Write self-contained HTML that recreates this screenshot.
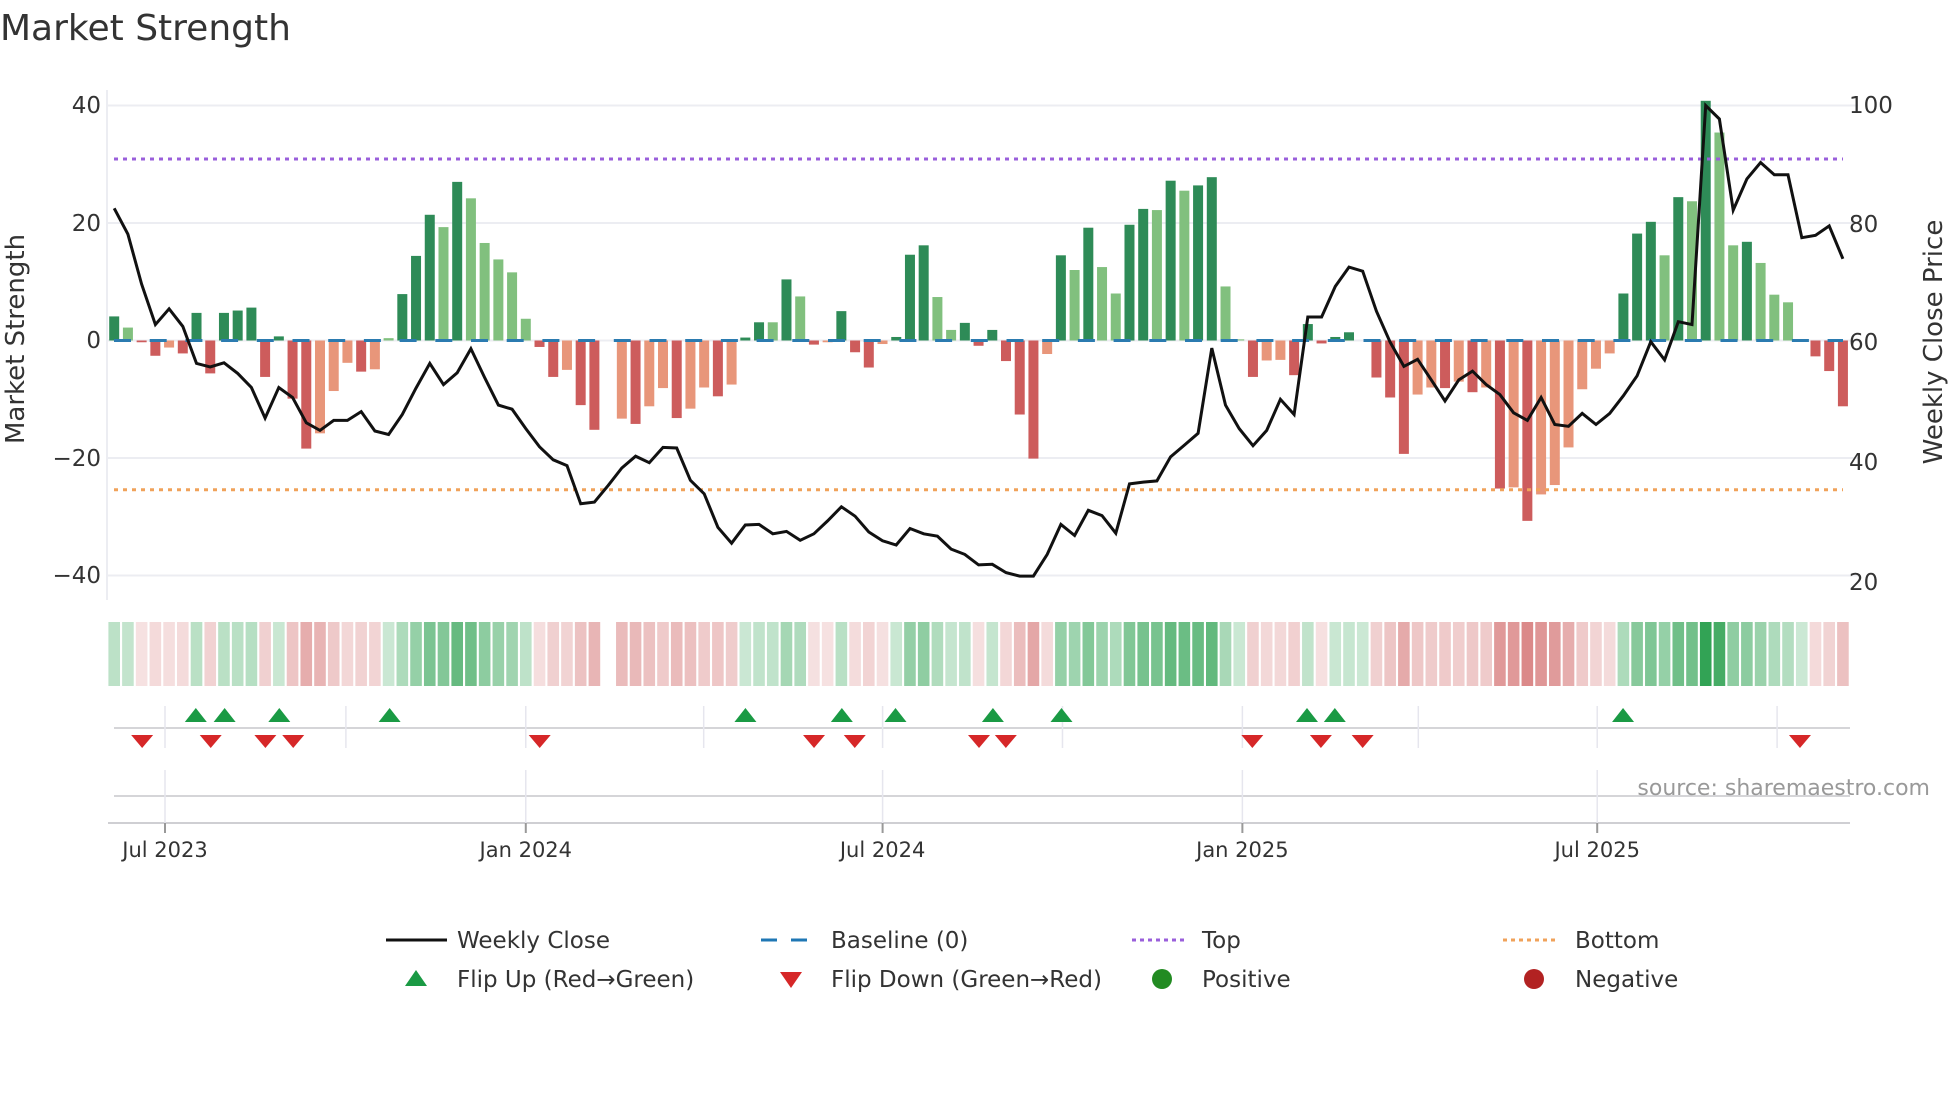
<!DOCTYPE html>
<html><head><meta charset="utf-8">
<style>
html,body{margin:0;padding:0;background:#fff;}
svg{display:block;font-family:"DejaVu Sans","Liberation Sans",sans-serif;}
</style></head>
<body>
<svg id="c" width="1960" height="1102" viewBox="0 0 1960 1102" xmlns="http://www.w3.org/2000/svg">
<rect width="1960" height="1102" fill="#fff"/>
<text x="0" y="40" font-size="36" fill="#333">Market Strength</text>
<g id="grid"></g>
<g id="heat"></g>
<g id="bars"></g>
<g id="lines"></g>
<g font-size="23" fill="#333" text-anchor="end">
<text x="101" y="113">40</text><text x="101" y="231">20</text><text x="101" y="348">0</text><text x="101" y="466">−20</text><text x="101" y="583">−40</text>
</g>
<g font-size="23" fill="#333">
<text x="1849" y="113">100</text><text x="1849" y="232">80</text><text x="1849" y="350">60</text><text x="1849" y="470">40</text><text x="1849" y="590">20</text>
</g>
<text transform="translate(24,339) rotate(-90)" font-size="26" fill="#333" text-anchor="middle">Market Strength</text>
<text transform="translate(1942,342) rotate(-90)" font-size="26" fill="#333" text-anchor="middle">Weekly Close Price</text>
<g font-size="21" fill="#333" text-anchor="middle" id="ticks"></g>
<text x="1930" y="795" font-size="22" fill="#999" text-anchor="end">source: sharemaestro.com</text>
<g font-size="23" fill="#333" transform="translate(-2,-5)">
<line x1="388" y1="945" x2="449" y2="945" stroke="#111" stroke-width="3"/>
<text x="459" y="953">Weekly Close</text>
<line x1="763" y1="945" x2="818" y2="945" stroke="#1f77b4" stroke-width="3" stroke-dasharray="16,14"/>
<text x="833" y="953">Baseline (0)</text>
<line x1="1134" y1="945" x2="1189" y2="945" stroke="#9a5fdb" stroke-width="3" stroke-dasharray="4,4"/>
<text x="1204" y="953">Top</text>
<line x1="1505" y1="945" x2="1561" y2="945" stroke="#f0a25a" stroke-width="3" stroke-dasharray="4,4"/>
<text x="1577" y="953">Bottom</text>
<polygon points="407,991 429,991 418,975" fill="#1a9a44"/>
<text x="459" y="992">Flip Up (Red→Green)</text>
<polygon points="782,977 804,977 793,993" fill="#d62728"/>
<text x="833" y="992">Flip Down (Green→Red)</text>
<circle cx="1164" cy="984" r="10" fill="#228b22"/>
<text x="1204" y="992">Positive</text>
<circle cx="1536" cy="984" r="10" fill="#b22222"/>
<text x="1577" y="992">Negative</text>
</g>
</svg>
<script>
(function(){
var NS="http://www.w3.org/2000/svg";
function el(p,t,a){var e=document.createElementNS(NS,t);for(var k in a)e.setAttribute(k,a[k]);p.appendChild(e);return e;}
function F(x){return x-(x-165)*0.0061;}
var V=[[4.1,'D'],[2.2,'L'],[-0.3,'R'],[-2.6,'R'],[-1.2,'S'],[-2.2,'R'],[4.7,'D'],[-5.6,'R'],[4.7,'D'],[5.1,'D'],[5.6,'D'],[-6.2,'R'],[0.7,'D'],[-9.9,'R'],[-18.4,'R'],[-15.8,'S'],[-8.6,'S'],[-3.8,'S'],[-5.3,'R'],[-4.9,'S'],[0.4,'L'],[7.9,'D'],[14.4,'D'],[21.4,'D'],[19.3,'L'],[27,'D'],[24.2,'L'],[16.6,'L'],[13.8,'L'],[11.6,'L'],[3.7,'L'],[-1.1,'R'],[-6.2,'R'],[-5,'S'],[-11,'R'],[-15.2,'R'],null,[-13.3,'S'],[-14.2,'R'],[-11.2,'S'],[-8.1,'S'],[-13.2,'R'],[-11.6,'S'],[-8,'S'],[-9.5,'R'],[-7.5,'S'],[0.5,'D'],[3.1,'D'],[3.1,'L'],[10.4,'D'],[7.5,'L'],[-0.7,'R'],[-0.3,'S'],[5,'D'],[-2,'R'],[-4.6,'R'],[-0.6,'S'],[0.6,'D'],[14.6,'D'],[16.2,'D'],[7.4,'L'],[1.8,'L'],[3,'D'],[-0.9,'R'],[1.8,'D'],[-3.5,'R'],[-12.6,'R'],[-20.1,'R'],[-2.3,'S'],[14.5,'D'],[12,'L'],[19.2,'D'],[12.5,'L'],[8,'L'],[19.7,'D'],[22.4,'D'],[22.2,'L'],[27.2,'D'],[25.5,'L'],[26.4,'D'],[27.8,'D'],[9.2,'L'],[0.2,'L'],[-6.2,'R'],[-3.4,'S'],[-3.3,'S'],[-5.9,'R'],[2.8,'D'],[-0.5,'R'],[0.6,'D'],[1.4,'D'],[0,'L'],[-6.3,'R'],[-9.7,'R'],[-19.3,'R'],[-9.2,'S'],[-8,'S'],[-8.1,'R'],[-7,'S'],[-8.8,'R'],[-8,'S'],[-25.2,'R'],[-25,'S'],[-30.7,'R'],[-26.2,'S'],[-24.6,'S'],[-18.2,'S'],[-8.3,'S'],[-4.8,'S'],[-2.2,'S'],[8,'D'],[18.2,'D'],[20.2,'D'],[14.5,'L'],[24.4,'D'],[23.7,'L'],[40.8,'D'],[35.4,'L'],[16.2,'L'],[16.8,'D'],[13.2,'L'],[7.8,'L'],[6.5,'L'],[0,'L'],[-2.7,'R'],[-5.2,'R'],[-11.2,'R']];
var P=[22.5,18.1,9.6,2.7,5.4,2.4,-3.9,-4.5,-3.8,-5.6,-8,-13.2,-8,-9.7,-14,-15.3,-13.6,-13.6,-12.1,-15.4,-16,-12.6,-8.1,-3.9,-7.5,-5.5,-1.4,-6.3,-11,-11.7,-15,-18.1,-20.3,-21.3,-27.8,-27.5,-24.7,-21.7,-19.7,-20.8,-18.2,-18.3,-23.8,-26.1,-31.8,-34.5,-31.4,-31.3,-32.9,-32.5,-34,-32.9,-30.7,-28.3,-29.9,-32.6,-34.1,-34.8,-32,-32.9,-33.3,-35.5,-36.4,-38.2,-38.1,-39.5,-40.1,-40.1,-36.4,-31.3,-33.2,-28.9,-29.8,-32.8,-24.4,-24.1,-23.9,-19.8,-17.8,-15.8,-1.3,-11,-15,-17.9,-15.3,-10,-12.6,4,4,9.2,12.5,11.8,5,-0.3,-4.4,-3.2,-6.7,-10.3,-6.7,-5.2,-7.5,-9.2,-12.3,-13.6,-9.7,-14.3,-14.6,-12.4,-14.3,-12.4,-9.4,-6,-0.2,-3.3,3.2,2.7,40,37.7,22.2,27.5,30.3,28.2,28.2,17.5,17.9,19.5,13.9];
function X(i){return 114.2+i*13.72;}
function Y(v){return 340.5-v*5.875;}
var col={D:'#2e8b57',L:'#81c07e',R:'#cd5c5c',S:'#e8967a'};
var g=document.getElementById('grid');
[40,20,0,-20,-40].forEach(function(v){el(g,'line',{x1:108,x2:1858,y1:Y(v),y2:Y(v),stroke:'#ecedf2','stroke-width':2});});
el(g,'line',{x1:107,x2:107,y1:90,y2:600,stroke:'#ecedf2','stroke-width':2});
el(g,'line',{x1:114,x2:1850,y1:728,y2:728,stroke:'#d5d5d8','stroke-width':2});
el(g,'line',{x1:114,x2:1850,y1:796,y2:796,stroke:'#d5d5d8','stroke-width':2});
el(g,'line',{x1:108,x2:1850,y1:823,y2:823,stroke:'#cfcfd3','stroke-width':2});
var tk=document.getElementById('ticks');
var labels=['Jul 2023','Jan 2024','Jul 2024','Jan 2025','Jul 2025'];
[165,528,887,1249,1606].forEach(function(x0,k){var x=F(x0);
 el(g,'line',{x1:x,x2:x,y1:706,y2:748,stroke:'#e6e6ee','stroke-width':1.5});
 el(g,'line',{x1:x,x2:x,y1:770,y2:823,stroke:'#e6e6ee','stroke-width':1.5});
 el(g,'line',{x1:x,x2:x,y1:823,y2:833,stroke:'#999','stroke-width':2});
 var t=el(tk,'text',{x:x,y:857});t.textContent=labels[k];
});
[347,707,1068,1426,1787].forEach(function(x){x=F(x);el(g,'line',{x1:x,x2:x,y1:706,y2:748,stroke:'#e6e6ee','stroke-width':1.5});});
var h=document.getElementById('heat'),b=document.getElementById('bars');
V.forEach(function(d,i){
 if(!d)return;var v=d[0],x=X(i);
 var a,c;
 if(v>=0){a=0.25+0.75*Math.min(1,v/41);c='49,163,84';}
 else{a=0.18+0.55*Math.min(1,-v/31);c='205,92,92';}
 el(h,'rect',{x:x-5.8,y:622,width:11.6,height:64,fill:'rgba('+c+','+a.toFixed(3)+')'});
 var y0=Y(0),y1=Y(v);
 if(Math.abs(v)>0.05)el(b,'rect',{x:x-5,y:Math.min(y0,y1),width:10,height:Math.abs(y1-y0),fill:col[d[1]]});
});
var L=document.getElementById('lines');
el(L,'line',{x1:114,x2:1843,y1:Y(30.9),y2:Y(30.9),stroke:'#9a5fdb','stroke-width':3,'stroke-dasharray':'4,5'});
el(L,'line',{x1:114,x2:1843,y1:Y(-25.4),y2:Y(-25.4),stroke:'#f0a25a','stroke-width':3,'stroke-dasharray':'4,5'});
el(L,'line',{x1:114,x2:1843,y1:Y(0),y2:Y(0),stroke:'#2b7bb0','stroke-width':3,'stroke-dasharray':'17,18.7'});
var pts=P.map(function(p,i){return X(i).toFixed(1)+','+Y(p).toFixed(1);}).join(' ');
el(L,'polyline',{points:pts,fill:'none',stroke:'#111','stroke-width':3,'stroke-linejoin':'miter'});
[196,225,280,391,749,846,900,998,1067,1314,1342,1632].forEach(function(x){x=F(x);el(L,'polygon',{points:(x-11)+',722 '+(x+11)+',722 '+x+',708',fill:'#1a9a44'});});
[142,211,266,294,542,818,859,984,1011,1259,1328,1370,1810].forEach(function(x){x=F(x);el(L,'polygon',{points:(x-11)+',735 '+(x+11)+',735 '+x+',748',fill:'#d62728'});});
})();
</script>
</body></html>
